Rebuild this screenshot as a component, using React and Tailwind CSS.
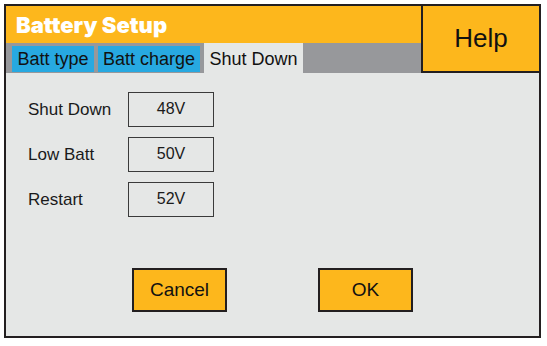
import React from "react";

const font = { fontFamily: "'Liberation Sans', Arial, sans-serif" };

function Row({ label, value }) {
  return (
    <div className="flex items-center h-[34px]">
      <div className="w-[100px] text-[17px] text-[#1a1a1a] pt-[1px]">{label}</div>
      <div className="w-[86px] h-[35px] border border-[#3a3a3a] flex items-center justify-center text-[16px] text-[#1a1a1a]">
        {value}
      </div>
    </div>
  );
}

export default function App() {
  return (
    <div className="w-[547px] h-[346px] bg-white p-[4px]" style={font}>
      <div className="w-[537px] h-[334px] border-2 border-[#231f20] bg-[#e5e7e6] flex flex-col">
        <div className="flex h-[67px]">
          <div className="flex-1 flex flex-col">
            <div className="h-[37px] bg-[#fdb71c] flex items-center pl-[10px] pt-[2px]">
              <span className="text-white font-black text-[22px]" style={{ fontFamily: "Inter, Roboto, sans-serif" }}>
                Battery Setup
              </span>
            </div>
            <div className="h-[30px] bg-[#97989b] flex items-end pl-[6px] gap-[4px]">
              <div className="h-[26px] w-[82px] bg-[#27a9e1] flex items-center justify-center text-[18px] text-[#111] mb-[1px]">Batt type</div>
              <div className="h-[26px] w-[102px] bg-[#27a9e1] flex items-center justify-center text-[18px] text-[#111] mb-[1px]">Batt charge</div>
              <div className="h-[30px] w-[99px] bg-[#e5e7e6] flex items-center justify-center text-[18px] text-[#111] pt-[3px]">Shut Down</div>
            </div>
          </div>
          <div className="w-[118px] border-l-2 border-b-2 border-[#231f20] bg-[#fdb71c] flex items-center justify-center">
            <span className="text-[26px] text-[#111]">Help</span>
          </div>
        </div>
        <div className="flex flex-col pl-[22px] pt-[19px] gap-[11px]">
          <Row label="Shut Down" value="48V" />
          <Row label="Low Batt" value="50V" />
          <Row label="Restart" value="52V" />
        </div>
        <div className="flex pl-[126px] mt-[52px] gap-[91px]">
          <button className="w-[95px] h-[44px] border-2 border-[#231f20] bg-[#fdb71c] text-[19px] text-[#111]">Cancel</button>
          <button className="w-[95px] h-[44px] border-2 border-[#231f20] bg-[#fdb71c] text-[19px] text-[#111]">OK</button>
        </div>
      </div>
    </div>
  );
}
